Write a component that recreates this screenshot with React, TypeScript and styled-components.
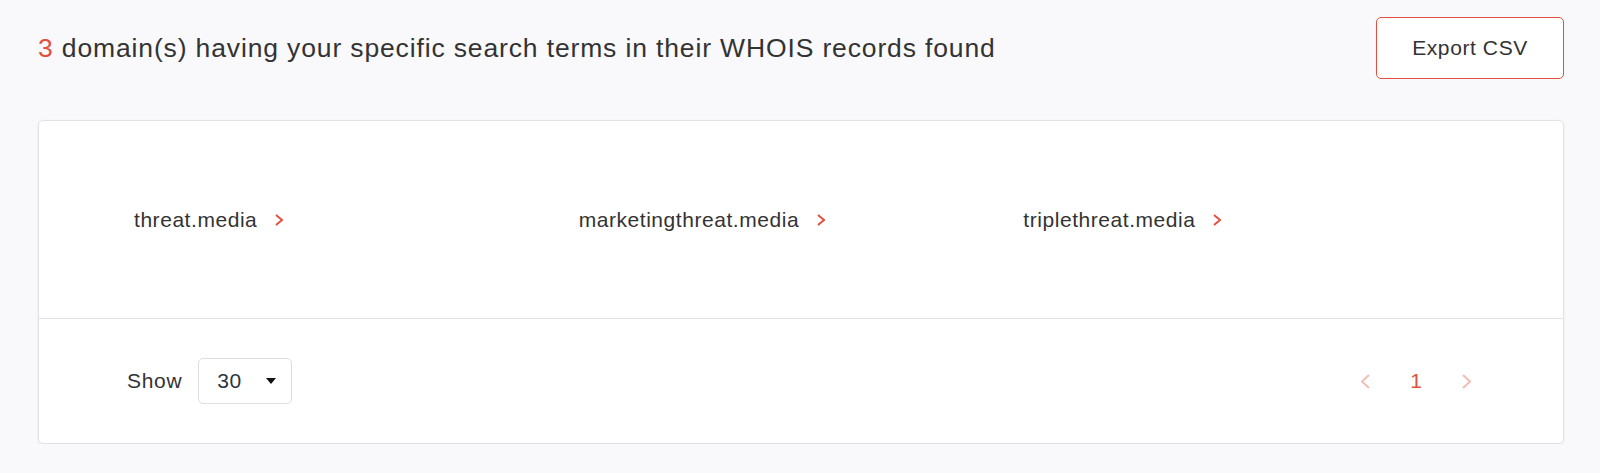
import React from "react";
import styled, { createGlobalStyle } from "styled-components";

const GlobalStyle = createGlobalStyle`
  html, body { margin: 0; padding: 0; background: #f9f9fb; }
  body { font-family: "Liberation Sans", Arial, Helvetica, sans-serif; color: #333; }
`;

const Page = styled.div`
  padding: 17px 36px 0 38px;
  display: flex;
  flex-direction: column;
  gap: 41px;
`;

const Header = styled.div`
  display: flex;
  align-items: center;
  justify-content: space-between;
`;

const Title = styled.h1`
  margin: 0;
  font-size: 26.5px;
  font-weight: 400;
  color: #333;
  letter-spacing: 0.86px;
`;

const Count = styled.span`
  color: #e2513f;
`;

const ExportButton = styled.button`
  width: 188px;
  height: 62px;
  background: #fff;
  border: 1px solid #e2513f;
  border-radius: 5px;
  font-family: inherit;
  font-size: 21px;
  letter-spacing: 0.6px;
  color: #333;
  cursor: pointer;
`;

const Card = styled.div`
  background: #fff;
  border: 1px solid #e2e2e4;
  border-radius: 5px;
  box-shadow: 0 1px 3px rgba(0, 0, 0, 0.06);
  display: flex;
  flex-direction: column;
`;

const DomainGrid = styled.div`
  height: 197px;
  padding: 0 95px;
  display: grid;
  grid-template-columns: repeat(3, 1fr);
  align-items: center;
  border-bottom: 1px solid #e2e2e4;
`;

const DomainLink = styled.a`
  display: inline-flex;
  align-items: center;
  gap: 18px;
  font-size: 21px;
  letter-spacing: 0.55px;
  color: #333;
  text-decoration: none;
  cursor: pointer;
`;

const Footer = styled.div`
  height: 124px;
  padding: 0 92px 0 88px;
  display: flex;
  align-items: center;
  justify-content: space-between;
`;

const ShowGroup = styled.div`
  display: flex;
  align-items: center;
  gap: 16px;
  font-size: 21px;
  letter-spacing: 0.7px;
  color: #333;
`;

const Select = styled.div`
  box-sizing: border-box;
  width: 94px;
  height: 46px;
  border: 1px solid #dedee0;
  border-radius: 5px;
  display: flex;
  align-items: center;
  justify-content: space-between;
  padding: 0 15px 0 18px;
  font-size: 21px;
  letter-spacing: 0.6px;
  color: #2d3440;
`;

const Pager = styled.div`
  display: flex;
  align-items: center;
  gap: 40px;
`;

const PageNum = styled.span`
  font-size: 21px;
  color: #e2513f;
`;

const Chevron = ({ color, w, h, sw, dir = "right" }: { color: string; w: number; h: number; sw: number; dir?: "left" | "right" }) => (
  <svg width={w} height={h} viewBox={`0 0 ${w} ${h}`} fill="none">
    <path
      d={dir === "right" ? `M1 1 L${w - 1} ${h / 2} L1 ${h - 1}` : `M${w - 1} 1 L1 ${h / 2} L${w - 1} ${h - 1}`}
      stroke={color}
      strokeWidth={sw}
      strokeLinecap="butt"
      strokeLinejoin="miter"
    />
  </svg>
);

const Caret = () => (
  <svg width="10" height="6" viewBox="0 0 10 6">
    <path d="M0 0 L10 0 L5 6 Z" fill="#111" />
  </svg>
);

const domains = ["threat.media", "marketingthreat.media", "triplethreat.media"];

export default function App() {
  return (
    <>
      <GlobalStyle />
      <Page>
        <Header>
          <Title>
            <Count>3</Count> domain(s) having your specific search terms in their WHOIS records found
          </Title>
          <ExportButton>Export CSV</ExportButton>
        </Header>
        <Card>
          <DomainGrid>
            {domains.map((d) => (
              <div key={d}>
                <DomainLink>
                  {d}
                  <Chevron color="#e2513f" w={8} h={12} sw={2} />
                </DomainLink>
              </div>
            ))}
          </DomainGrid>
          <Footer>
            <ShowGroup>
              Show
              <Select>
                30
                <Caret />
              </Select>
            </ShowGroup>
            <Pager>
              <Chevron color="#f3bdb5" w={9} h={15} sw={2} dir="left" />
              <PageNum>1</PageNum>
              <Chevron color="#f3bdb5" w={9} h={15} sw={2} />
            </Pager>
          </Footer>
        </Card>
      </Page>
    </>
  );
}
